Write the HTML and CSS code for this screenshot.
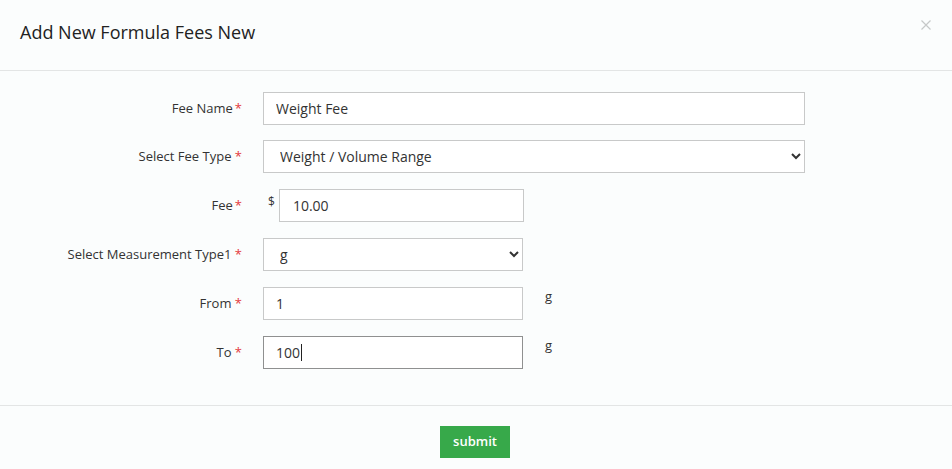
FILE: index.html
```html
<!DOCTYPE html>
<html lang="en">
<head>
<meta charset="utf-8">
<title>Add New Formula Fees New</title>
<link rel="stylesheet" href="styles.css">
</head>
<body>
<div class="modal">
  <div class="modal-header">
    <h4 class="modal-title">Add New Formula Fees New</h4>
    <button class="close" type="button" aria-label="Close">
      <svg width="10" height="10" viewBox="0 0 10 10"><path d="M0.5 0.5 L9.5 9.5 M9.5 0.5 L0.5 9.5" stroke="#c6c8c8" stroke-width="1.2" fill="none"/></svg>
    </button>
  </div>
  <form class="modal-body">
    <div class="row first">
      <label class="label">Fee Name<span class="req tight">*</span></label>
      <div class="control"><input class="input wide" type="text" value="Weight Fee"></div>
    </div>
    <div class="row">
      <label class="label">Select Fee Type <span class="req">*</span></label>
      <div class="control">
        <select class="input wide select"><option>Weight / Volume Range</option></select>
      </div>
    </div>
    <div class="row">
      <label class="label">Fee<span class="req tight">*</span></label>
      <div class="control"><span class="prefix">$</span><input class="input fee" type="text" value="10.00"></div>
    </div>
    <div class="row">
      <label class="label">Select Measurement Type1 <span class="req">*</span></label>
      <div class="control">
        <select class="input narrow select"><option>g</option></select>
      </div>
    </div>
    <div class="row">
      <label class="label">From <span class="req">*</span></label>
      <div class="control"><input class="input narrow" type="text" value="1"><span class="unit">g</span></div>
    </div>
    <div class="row">
      <label class="label">To <span class="req">*</span></label>
      <div class="control"><div class="caret-wrap"><input class="input narrow focused" type="text" value="100"><span class="caret"></span></div><span class="unit">g</span></div>
    </div>
  </form>
  <div class="modal-footer">
    <button class="btn-submit" type="button">submit</button>
  </div>
</div>
</body>
</html>
```
FILE: styles.css
```css
* { box-sizing: border-box; }
html, body { margin: 0; padding: 0; }
body {
  background: #fbfdfd;
  font-family: "Open Sans", "Noto Sans", sans-serif;
  color: #333;
}
.modal { width: 952px; }
.modal-header {
  height: 71px;
  border-bottom: 1px solid #e3e5e5;
  display: flex;
  align-items: center;
  justify-content: space-between;
  padding: 0 21px 0 20px;
}
.modal-title {
  margin: 0;
  font-size: 18px;
  font-weight: 400;
  color: #222;
  padding-bottom: 6px;
}
.close {
  background: none;
  border: 0;
  padding: 0;
  margin: 20px 0 0 0;
  align-self: flex-start;
  line-height: 0;
}
.modal-body {
  padding: 21px 0 36px 0;
  display: flex;
  flex-direction: column;
  gap: 16px;
  border-bottom: 1px solid #e3e5e5;
}
.row {
  display: grid;
  grid-template-columns: 242px 1fr;
  column-gap: 21px;
  align-items: start;
}
.row.first { margin-bottom: -1px; }
.label {
  text-align: right;
  font-size: 13px;
  line-height: 18px;
  padding-top: 6.5px;
  color: #333;
}
.req { color: #e4393c; }
.req.tight { margin-left: 2px; }
.control {
  display: flex;
  align-items: flex-start;
}
.input {
  height: 33px;
  border: 1px solid #c8c9c9;
  background: #fff;
  font-family: "Open Sans", "Noto Sans", sans-serif;
  font-size: 14px;
  color: #333;
  padding: 0 12px;
  border-radius: 0;
  outline: none;
  margin: 0;
}
.wide { width: 542px; }
.narrow { width: 260px; }
.fee { width: 245px; padding-left: 13px; }
.select { padding-left: 12px; }
.focused { border-color: #8f9090; }
.prefix {
  font-size: 12px;
  line-height: 18px;
  padding: 4px 4px 0 5px;
}
.unit {
  font-size: 13px;
  line-height: 18px;
  margin-left: 22px;
}
.caret-wrap { position: relative; line-height: 0; }
.caret {
  position: absolute;
  left: 38px;
  top: 8px;
  width: 1px;
  height: 17px;
  background: #222;
}
.modal-footer {
  display: flex;
  justify-content: center;
  padding: 20px 2px 20px 0;
}
.btn-submit {
  width: 70px;
  height: 32px;
  background: #37a94a;
  color: #fff;
  border: 0;
  border-radius: 0;
  font-family: "Open Sans", "Noto Sans", sans-serif;
  font-size: 13px;
  font-weight: 600;
  padding: 0 0 2px 0;
}
```
